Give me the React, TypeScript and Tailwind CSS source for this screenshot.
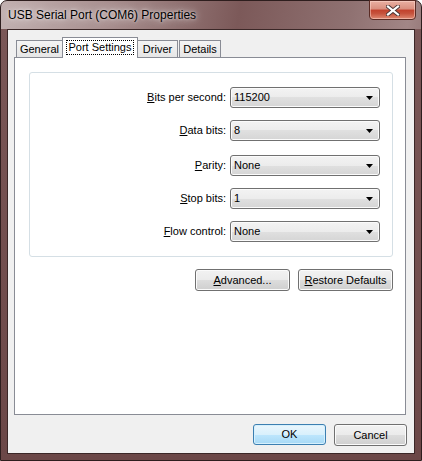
import React from 'react';

const rows = [
    { label: 'Bits per second:', key: 'B', rest: 'its per second:', value: '115200', gap: 'mt-0' },
    { label: 'Data bits:', key: 'D', rest: 'ata bits:', value: '8', gap: 'mt-[12px]' },
    { label: 'Parity:', key: 'P', rest: 'arity:', value: 'None', gap: 'mt-[14px]' },
    { label: 'Stop bits:', key: 'S', rest: 'top bits:', value: '1', gap: 'mt-[12px]' },
    { label: 'Flow control:', key: 'F', rest: 'low control:', value: 'None', gap: 'mt-[12px]' }
];

const btn =
    'h-[22px] rounded-[3px] border border-[#707070] bg-[linear-gradient(#f2f2f2,#ebebeb_50%,#dddddd_50%,#cfcfcf)] shadow-[inset_0_0_0_1px_#fbfbfb] flex items-center justify-center text-black';

const Combo: React.FC<{ value: string }> = ({ value }) => (
    <div className="w-[150px] h-[21px] rounded-[3px] border border-[#707070] bg-[linear-gradient(#f3f3f3,#ececec_50%,#e0e0e0_50%,#d5d5d5)] shadow-[inset_0_0_0_1px_#fbfbfb] flex items-center justify-between pl-[3px] pr-[6px]">
        <span>{value}</span>
        <svg width="7" height="4" viewBox="0 0 7 4">
            <path d="M0 0h7L3.5 4z" fill="#000" />
        </svg>
    </div>
);

const Tab: React.FC<{ label: string; w: string }> = ({ label, w }) => (
    <div className={`${w} h-[17px] border border-b-0 border-[#898c95] bg-[linear-gradient(#f4f4f4,#e6e6e6)] flex items-center justify-center`}>
        {label}
    </div>
);

const CloseGlyph: React.FC = () => (
    <svg width="14" height="11" viewBox="0 0 14 11">
        <path d="M2 1.5L12 9.5M12 1.5L2 9.5" stroke="#4a3535" strokeWidth="4" strokeLinecap="square" />
        <path d="M2 1.5L12 9.5M12 1.5L2 9.5" stroke="#ffffff" strokeWidth="2.2" strokeLinecap="square" />
    </svg>
);

export default function App() {
    return (
        <div className="w-[422px] h-[461px] bg-white font-['Liberation_Sans',Arial,sans-serif] text-[11px] text-black">
            <div className="w-full h-full rounded-t-[7px] border border-[#2e1e1e] bg-[linear-gradient(100deg,#c2b1b1_0%,#a88f8f_22%,#7c5959_48%,#8f7171_70%,#a28686_82%,#6b4a4a_100%)] flex flex-col">
                {/* title bar */}
                <div className="h-[28px] flex items-start justify-between">
                    <div className="pl-[7px] pt-[7px] text-[12px] leading-[14px] text-black [text-shadow:0_0_8px_rgba(255,255,255,0.95),0_0_3px_rgba(255,255,255,0.7)]">
                        USB Serial Port (COM6) Properties
                    </div>
                    <div className="mr-[5px] -mt-px w-[47px] h-[20px] rounded-b-[4px] border border-[#5a2b24] bg-[linear-gradient(#eab0a2,#d98e7e_45%,#c2412c_50%,#c6533d_70%,#df8a73)] shadow-[inset_0_0_0_1px_rgba(255,220,210,0.5)] flex items-center justify-center">
                        <CloseGlyph />
                    </div>
                </div>

                {/* client */}
                <div className="flex-1 px-[6px] pb-[6px] bg-[linear-gradient(#7a5757,#6b4747)]">
                    <div className="w-[408px] h-[425px] border border-[#3b2727] bg-[#f0f0f0] flex flex-col pt-[7px]">
                        <div className="flex items-end pl-[8px] h-[20px]">
                            <Tab label="General" w="w-[47px]" />
                            <div className="relative z-10 w-[76px] h-[21px] -mb-px -mx-px border border-b-0 border-[#898c95] bg-white flex items-start justify-center pt-[2px]">
                                <span className="border border-dotted border-black px-[2px] leading-[13px]">Port Settings</span>
                            </div>
                            <Tab label="Driver" w="w-[41px]" />
                            <div className="w-px" />
                            <Tab label="Details" w="w-[42px]" />
                        </div>
                        <div className="ml-[6px] w-[392px] h-[358px] border border-[#898c95] bg-white pl-[14px] pt-[14px]">
                            <div className="w-[364px] h-[185px] rounded-[3px] border border-[#d5dfe5] pt-[14px]">
                                {rows.map((r) => (
                                    <div key={r.label} className={`${r.gap} flex items-center`}>
                                        <div className="w-[200px] text-right pr-[4px]">
                                            <u className="underline-offset-[1px]">{r.key}</u>
                                            {r.rest}
                                        </div>
                                        <Combo value={r.value} />
                                    </div>
                                ))}
                            </div>
                            <div className="w-[364px] mt-[12px] flex justify-end gap-[8px]">
                                <div className={`${btn} w-[95px]`}>
                                    <span>
                                        <u className="underline-offset-[1px]">A</u>dvanced...
                                    </span>
                                </div>
                                <div className={`${btn} w-[95px]`}>
                                    <span>
                                        <u className="underline-offset-[1px]">R</u>estore Defaults
                                    </span>
                                </div>
                            </div>
                        </div>
                        <div className="mt-[9px] pr-[7px] flex justify-end gap-[8px]">
                            <div className="w-[73px] h-[21px] rounded-[3px] border border-[#3c7fb1] bg-[linear-gradient(#eaf6fd,#d9f0fc_50%,#bee6fd_50%,#a7d9f5)] shadow-[inset_0_0_0_1px_#d6f0fd] flex items-center justify-center">
                                OK
                            </div>
                            <div className={`${btn} w-[73px] h-[21px]`}>Cancel</div>
                        </div>
                    </div>
                </div>
            </div>
        </div>
    );
}
